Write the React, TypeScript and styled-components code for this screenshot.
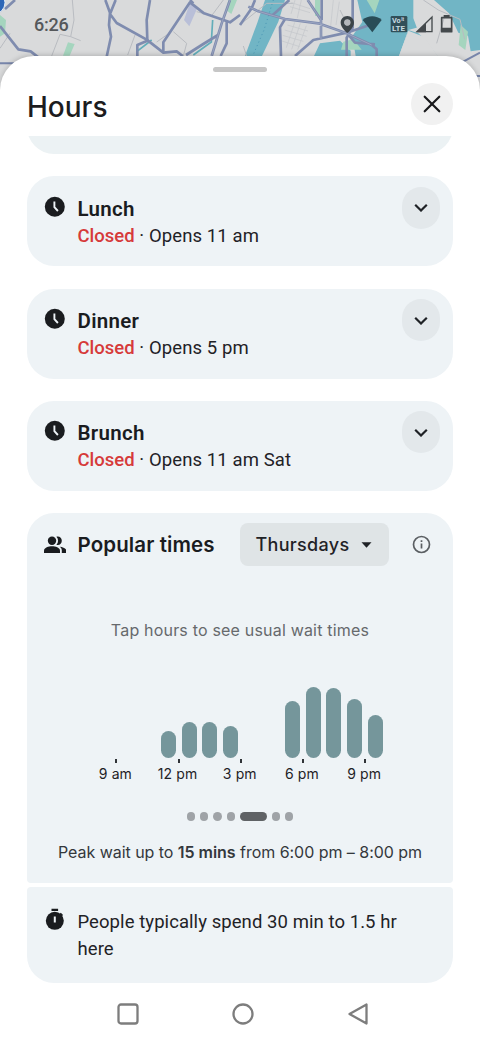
import React from "react";
import styled, { createGlobalStyle } from "styled-components";

const GlobalStyle = createGlobalStyle`
  *, *::before, *::after { box-sizing: border-box; }
  body { margin: 0; background: #fff; }
`;

const roboto = `Roboto, "Liberation Sans", sans-serif`;
const display = `Inter, Roboto, sans-serif`;

const Screen = styled.main`
  position: relative;
  display: flex;
  flex-direction: column;
  width: 480px;
  height: 1041px;
  overflow: hidden;
  background: #fff;
  font-family: ${roboto};
  color: #1f2226;
`;

const MapBackdrop = styled.svg`
  position: absolute;
  top: 0;
  left: 0;
  width: 480px;
  height: 100px;
`;

const StatusBar = styled.header`
  position: relative;
  display: flex;
  justify-content: space-between;
  align-items: flex-start;
  flex: none;
  height: 56px;
  padding: 13px 26px 0 34px;
`;

const Clock = styled.time`
  font-size: 18px;
  line-height: 24px;
  font-weight: 500;
  letter-spacing: -0.2px;
  color: #55585b;
`;

const StatusIcons = styled.svg`
  width: 114px;
  height: 22px;
`;

const Sheet = styled.section`
  position: relative;
  display: flex;
  flex-direction: column;
  flex: 1;
  border-radius: 34px 34px 0 0;
  background: #fff;
  box-shadow: 0 -1px 5px rgba(0, 0, 0, 0.18);
`;

const Handle = styled.div`
  align-self: center;
  width: 54px;
  height: 5px;
  margin-top: 11px;
  border-radius: 3px;
  background: #c6c6c6;
`;

const SheetHeader = styled.div`
  display: flex;
  justify-content: space-between;
  align-items: center;
  height: 64px;
  padding: 0 27px;
`;

const Title = styled.h1`
  margin: 5px 0 0;
  font: 450 28px/36px ${display};
  letter-spacing: 0;
  color: #1c1c1e;
`;

const CloseButton = styled.button`
  display: grid;
  place-items: center;
  width: 42px;
  height: 42px;
  padding: 0;
  border: 0;
  border-radius: 50%;
  background: #f1f1f1;
`;

const Content = styled.div`
  display: flex;
  flex-direction: column;
  gap: 22.3px;
  padding: 0 27px;
`;

const PreviousCardEdge = styled.div`
  height: 18px;
  overflow: hidden;
  display: flex;
  align-items: flex-end;

  &::after {
    content: "";
    flex: 1;
    height: 60px;
    border-radius: 27px;
    background: #ecf2f4;
  }
`;

const MealCard = styled.article`
  display: flex;
  align-items: flex-start;
  height: 90px;
  padding: 10.5px 13px 0 17px;
  border-radius: 27px;
  background: #eef3f6;
`;

const LeadIcon = styled.svg<{ $top: number }>`
  flex: none;
  width: 22px;
  height: 22px;
  margin-top: ${(p) => p.$top}px;
`;

const MealText = styled.div`
  flex: 1;
  padding: 9px 0 0 11.5px;
  font-size: 18.5px;
  line-height: 27px;
`;

const MealName = styled.h2`
  margin: 0;
  font-size: 20.5px;
  line-height: 27px;
  font-weight: 600;
  letter-spacing: 0.3px;
  color: #1a1c1f;
`;

const MealStatus = styled.p`
  margin: 0;
  letter-spacing: 0.1px;
`;

const Closed = styled.span`
  font-weight: 500;
  letter-spacing: 0;
  color: #d63a3a;
`;

const ExpandButton = styled.button`
  display: grid;
  place-items: center;
  width: 38px;
  height: 42px;
  padding: 0;
  border: 0;
  border-radius: 19px;
  background: #e3e8eb;
`;

const InsightStack = styled.div`
  display: flex;
  flex-direction: column;
  gap: 4px;
`;

const PopularCard = styled.article`
  height: 370px;
  padding: 10px 22px 0 17px;
  border-radius: 27px 27px 4px 4px;
  background: #eef3f6;
`;

const PopularHeader = styled.div`
  display: flex;
  align-items: center;
  height: 43px;
`;

const PopularTitle = styled.h2`
  flex: 1;
  margin: 0 0 0 11.5px;
  font: 600 20.5px/28px ${display};
  letter-spacing: 0.1px;
  white-space: nowrap;
  color: #1a1c1f;
`;

const DayButton = styled.button`
  display: flex;
  justify-content: space-between;
  align-items: center;
  width: 149px;
  height: 43px;
  margin-right: 23.5px;
  padding: 0 17px 0 16px;
  border: 0;
  border-radius: 8px;
  background: #dfe4e6;
  font: 450 18px/24px ${display};
  letter-spacing: 0.3px;
  color: #1f2226;
`;

const Hint = styled.p`
  margin: 54px 0 0 5px;
  font: 430 16px/20px ${display};
  letter-spacing: 0.19px;
  text-align: center;
  color: #66696c;
`;

const Chart = styled.div`
  padding: 47.3px 0 0 55px;
`;

const Bars = styled.div`
  display: flex;
  align-items: flex-end;
  gap: 5.68px;
  height: 70.5px;
`;

const Bar = styled.div<{ $height: number }>`
  flex: none;
  width: 15px;
  height: ${(p) => p.$height}px;
  border-radius: 7.5px;
  background: #75969b;
`;

const Axis = styled.div`
  display: flex;
  margin: 1px 0 0 -14.7px;
`;

const AxisLabel = styled.span`
  display: flex;
  flex-direction: column;
  align-items: center;
  flex: none;
  width: 62.2px;
  font: 430 14px/20px ${display};
  letter-spacing: 0.1px;
  white-space: nowrap;

  &::before {
    content: "";
    width: 2px;
    height: 4px;
    margin: 0 0 1px 2px;
    background: #303438;
  }
`;

const Pager = styled.div`
  display: flex;
  justify-content: center;
  gap: 4.8px;
  margin: 28.5px 0 0 5px;
`;

const PageDot = styled.i<{ $active: boolean }>`
  width: ${(p) => (p.$active ? 27 : 8.5)}px;
  height: 8.5px;
  border-radius: 5px;
  background: ${(p) => (p.$active ? "#5f6265" : "#9fa3a7")};
`;

const PeakNote = styled.p`
  margin: 20px -10px 0 -5px;
  font: 400 16px/22px ${display};
  letter-spacing: -0.04px;
  text-align: center;
  white-space: nowrap;
  color: #34383c;

  b {
    font-weight: 600;
  }
`;

const VisitCard = styled.article`
  display: flex;
  height: 96px;
  padding: 0 40px 0 17px;
  border-radius: 4px 4px 27px 27px;
  background: #eef3f6;
`;

const VisitText = styled.p`
  flex: 1;
  margin: 22px 0 0 11.5px;
  font-size: 18.5px;
  line-height: 27px;
  letter-spacing: 0.07px;
`;

const NavBar = styled.nav`
  display: flex;
  justify-content: center;
  gap: 91px;
  margin: 19px 0 0 6px;
`;

const NavIcon = styled.svg`
  width: 24px;
  height: 24px;
  fill: none;
  stroke: #7d7d7d;
  stroke-width: 2.3;
  stroke-linejoin: round;
`;

const meals = [
  { name: "Lunch", opens: "Opens 11 am" },
  { name: "Dinner", opens: "Opens 5 pm" },
  { name: "Brunch", opens: "Opens 11 am Sat" },
];

const barHeights = [0, 0, 0, 26.5, 36, 36, 32, 0, 0, 56.5, 70.5, 69.5, 58.5, 43];
const axisHours = ["9 am", "12 pm", "3 pm", "6 pm", "9 pm"];
const pages = [0, 1, 2, 3, 4, 5, 6];

function CityMap() {
  return (
    <MapBackdrop viewBox="0 0 1440 300" aria-hidden="true">
      <rect width="1440" height="300" fill="#d9dadb" />
      <g fill="#a5d5be">
        <path d="M0 45 18 60 15 100 0 110zM204 127l20 5-15 35h-20zM685 0h26l-17 42-16-12zM945 0h15v48h-15z" />
      </g>
      <path d="M570 8 593 22 568 79 552 60z" fill="#b9bfd8" />
      <g fill="#71b5c5">
        <path d="M795 0h60l-20 65-49 103h-51l37-100z" />
        <path d="M1072 0h188l-10 38 10 42-35 10-28 78h-130l-10-60 30-42zM1302 0h138v150l-28 4-8-47-29-9-28-58z" />
        <path d="M1225 90l30 10 22 20 35 48h-110zM960 130l60-8 32 30v16H942z" />
      </g>
      <path d="M1100 0h38l-14 40z" fill="#a5d5be" />
      <path d="M1240 0h32l43 30 0 40-60 25-15-40zM1225 92l50 20 38 56h-116z" fill="#d9dadb" />
      <path d="M1382 75l22 20-8 55-20-15zM1030 125l30-8 25 32h-62z" fill="#a5d5be" />
      <path d="M820 0 792 90 758 168" fill="none" stroke="#4794b3" strokeWidth="3" strokeDasharray="3 9" />
      <g fill="none" stroke="#b9bcc1" strokeWidth="3">
        <path d="M217 0l5 60-10 50 30 12M212 110 180 103 155 168M520 95l40 35-10 38M405 105l-22 60M510 98l-40 28M0 145l30-45M590 35l45 12 35-47" />
        <path d="M1270 0l45 30 65 28 14 60M1335 45l-25 85M1020 30l25 50M725 70l75-60 80 0M740 168l-10-30" />
      </g>
      <g fill="none" stroke="#c2c5ca" strokeWidth="2">
        <path d="M862 75l62 18M854 90l66 19M848 106l62 18M843 122l56 18M884 67l-25 76M901 70l-26 78M919 77l-26 72M870 20l60 18M874 8l56 18M885 0l-12 42M904 0l-12 54M1000 0l-8 78M1018 5l-10 70" />
      </g>
      <path d="M638 60 634 126 580 165M410 155l45-35" fill="none" stroke="#62adb9" strokeWidth="5" />
      <g fill="none" stroke="#7f8caf" strokeWidth="8" strokeLinejoin="round">
        <path d="M0 78 55 148 92 154 115 172M15 27 45 0" />
        <path d="M316 0 330 38 327 75 333 110 320 170M347 0 330 42 350 69 440 119 490 158 530 154 548 168" />
        <path d="M450 0 440 60 442 120M412 168V135L442 122M490 155V127L570 7 612 40 690 67 720 45M570 0 580 10M690 0 665 70 635 168M558 165 610 132 654 105M680 65V130l-18 38" />
        <path d="M720 75 755 25 765 0M745 20l30 14 80 23 100 13 85 30 75 35 15 13v20M855 57l-15 25 3 86M815 48l53-48M885 168l55-48 100-22 85-28M923 0l40 60 0 58M965 0v60M1040 168v-55l18-30 0-83M1040 98l25 30 60 5" />
      </g>
      <g fill="none" stroke="#a9b2ca" strokeWidth="2">
        <path d="M745 20l30 14 80 23 100 13 85 30 75 35M923 0l40 60 0 58M690 0 665 70 635 168" />
      </g>
      <path d="M0 190H60M1380 190l60-32M1410 228h30" fill="none" stroke="#7785aa" strokeWidth="6" />
      <circle cx="-20" cy="8" r="35" fill="#2e67b7" stroke="#e6edf5" strokeWidth="3" />
    </MapBackdrop>
  );
}

function SystemIcons() {
  return (
    <StatusIcons viewBox="0 0 342 66" aria-hidden="true">
      <path fill="#3c4449" fillRule="evenodd" d="M22 9C10 9 2 18 2 29c0 15 20 31 20 31s20-16 20-31C42 18 34 9 22 9zm0 11a8.500 8.500 0 1 1 0 17 8.500 8.500 0 0 1 0-17z" />
      <circle cx="22" cy="28.500" r="9.500" fill="#b4b7bb" />
      <path fill="#294c57" d="M68 21C83 6 110 6 125 21L97 58z" />
      <rect x="152" y="9" width="50" height="49" rx="4" fill="#314f59" />
      <g fill="#c8dce1" fontFamily="Roboto, sans-serif" fontWeight="700">
        <text x="156" y="31" fontSize="22">Vo</text>
        <text x="184" y="24" fontSize="14">lt</text>
        <text x="156" y="54" fontSize="24">LTE</text>
      </g>
      <path fill="none" stroke="#44494c" strokeWidth="4" d="M276 12v44h-45z" />
      <path fill="#44494c" d="M258 31v27h-29z" />
      <path fill="none" stroke="#44494c" strokeWidth="5" strokeLinejoin="round" d="M305 14h30v42h-30z" />
      <path fill="#44494c" d="M311 6h18v8h-18zM305 44h30v12h-30z" />
    </StatusIcons>
  );
}

function ClockIcon() {
  return (
    <LeadIcon $top={9} viewBox="0 0 22 22" aria-hidden="true">
      <circle cx="10.800" cy="10.800" r="10" fill="#1a1c1f" />
      <path d="M10.400 5.500v5.700l3.500 3.800" fill="none" stroke="#eef3f7" strokeWidth="1.900" />
    </LeadIcon>
  );
}

export default function App() {
  return (
    <Screen>
      <GlobalStyle />
      <CityMap />
      <StatusBar>
        <Clock>6:26</Clock>
        <SystemIcons />
      </StatusBar>
      <Sheet>
        <Handle />
        <SheetHeader>
          <Title>Hours</Title>
          <CloseButton aria-label="Close">
            <svg width="18" height="18" viewBox="0 0 18 18" fill="none" stroke="#18191b" strokeWidth="2.200" strokeLinecap="round">
              <path d="M1.700 1.700l14.600 14.600M16.300 1.700L1.700 16.300" />
            </svg>
          </CloseButton>
        </SheetHeader>
        <Content>
          <PreviousCardEdge />
          {meals.map((meal) => (
            <MealCard key={meal.name}>
              <ClockIcon />
              <MealText>
                <MealName>{meal.name}</MealName>
                <MealStatus>
                  <Closed>Closed</Closed> · {meal.opens}
                </MealStatus>
              </MealText>
              <ExpandButton aria-label={`Expand ${meal.name}`}>
                <svg width="14" height="9" viewBox="0 0 14 9" fill="none" stroke="#1f2226" strokeWidth="2.200">
                  <path d="M1.200 1.800L7 7.500l5.800-5.700" />
                </svg>
              </ExpandButton>
            </MealCard>
          ))}
          <InsightStack>
            <PopularCard>
              <PopularHeader>
                <LeadIcon $top={0} viewBox="0 0 22 22" fill="#1a1c1f" aria-hidden="true">
                  <circle cx="8" cy="6.700" r="4.200" />
                  <path d="M0 19v-2.300c0-3.300 4.600-4.500 8-4.500s8 1.200 8 4.500V19z" />
                  <path d="M12.400 10.700a5.600 5.600 0 0 0 0-8c3-.8 5.400 1.100 5.400 4s-2.400 4.900-5.400 4zM17.800 19v-2.400c0-1.700-.8-2.900-2-3.800 3.200.4 6.500 1.600 6.500 4V19z" />
                </LeadIcon>
                <PopularTitle>Popular times</PopularTitle>
                <DayButton>
                  Thursdays
                  <svg width="11" height="6" viewBox="0 0 11 6" fill="#1f2226">
                    <path d="M.5.300h10L5.500 5.700z" />
                  </svg>
                </DayButton>
                <svg width="19" height="19" viewBox="0 0 19 19" fill="none" stroke="#5b5f63" strokeWidth="1.700">
                  <circle cx="9.500" cy="9.500" r="8" />
                  <path d="M9.500 8.400v5M9.500 5.200v1.900" />
                </svg>
              </PopularHeader>
              <Hint>Tap hours to see usual wait times</Hint>
              <Chart>
                <Bars>
                  {barHeights.map((height, i) => (
                    <Bar key={i} $height={height} />
                  ))}
                </Bars>
                <Axis>
                  {axisHours.map((hour) => (
                    <AxisLabel key={hour}>{hour}</AxisLabel>
                  ))}
                </Axis>
              </Chart>
              <Pager>
                {pages.map((page) => (
                  <PageDot key={page} $active={page === 4} />
                ))}
              </Pager>
              <PeakNote>
                Peak wait up to <b>15 mins</b> from 6:00 pm – 8:00 pm
              </PeakNote>
            </PopularCard>
            <VisitCard>
              <LeadIcon $top={21} viewBox="0 0 22 22" aria-hidden="true">
                <circle cx="10.800" cy="12.800" r="9" fill="#1a1c1f" />
                <path d="M7.500 1.800h6.600M16 5.500l2.300 2.300" stroke="#1a1c1f" strokeWidth="2.200" />
                <path d="M10.800 8.500v6" stroke="#eef3f7" strokeWidth="2" />
              </LeadIcon>
              <VisitText>People typically spend 30 min to 1.5 hr here</VisitText>
            </VisitCard>
          </InsightStack>
        </Content>
        <NavBar>
          <NavIcon viewBox="0 0 24 24">
            <rect x="2.500" y="2.500" width="19" height="19" rx="2.500" />
          </NavIcon>
          <NavIcon viewBox="0 0 24 24">
            <circle cx="12" cy="12" r="9.500" />
          </NavIcon>
          <NavIcon viewBox="0 0 24 24">
            <path d="M20.500 2.500v19L3.500 12z" />
          </NavIcon>
        </NavBar>
      </Sheet>
    </Screen>
  );
}
